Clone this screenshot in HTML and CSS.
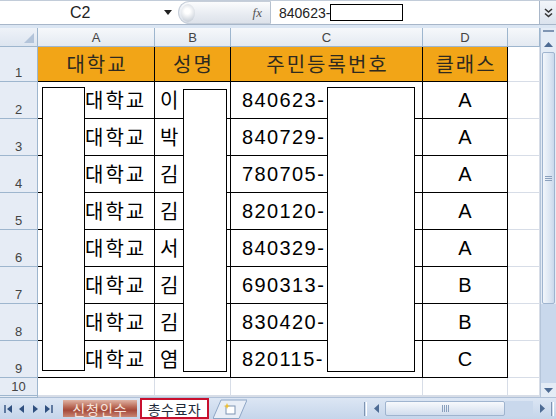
FILE: index.html
```html
<!DOCTYPE html>
<html lang="ko">
<head>
<meta charset="utf-8">
<title>Sheet</title>
<link rel="stylesheet" href="styles.css">
</head>
<body>
<div class="excel">
  <div class="formula-bar">
    <div class="name-box"><span class="name">C2</span><svg class="dd" width="8" height="5" viewBox="0 0 8 5"><path d="M0 0H8L4 5Z" fill="#222"/></svg></div>
    <div class="fx-knob"><span class="knob"></span><span class="fx">fx</span></div>
    <div class="formula-input"><span class="ftext">840623-</span><span class="fmask"></span></div>
    <div class="expand"><svg width="9" height="10" viewBox="0 0 9 10"><path d="M1 1L4.5 4L8 1M1 5.5L4.5 8.5L8 5.5" fill="none" stroke="#333" stroke-width="1.6"/></svg></div>
  </div>
  <div class="band"></div>
  <div class="main">
    <div class="grid-wrap">
      <div class="grid">
        <div class="corner"></div><div class="ch">A</div><div class="ch">B</div><div class="ch">C</div><div class="ch">D</div><div class="ch"></div>

        <div class="rh">1</div><div class="c t hd">대학교</div><div class="c t hd">성명</div><div class="c t hd">주민등록번호</div><div class="c t hd">클래스</div><div class="c"></div>

        <div class="rh">2</div><div class="c t ca">대학교</div><div class="c t cb">이</div><div class="c t cc">840623-</div><div class="c t cd">A</div><div class="c"></div>
        <div class="rh">3</div><div class="c t ca">대학교</div><div class="c t cb">박</div><div class="c t cc">840729-</div><div class="c t cd">A</div><div class="c"></div>
        <div class="rh">4</div><div class="c t ca">대학교</div><div class="c t cb">김</div><div class="c t cc">780705-</div><div class="c t cd">A</div><div class="c"></div>
        <div class="rh">5</div><div class="c t ca">대학교</div><div class="c t cb">김</div><div class="c t cc">820120-</div><div class="c t cd">A</div><div class="c"></div>
        <div class="rh">6</div><div class="c t ca">대학교</div><div class="c t cb">서</div><div class="c t cc">840329-</div><div class="c t cd">A</div><div class="c"></div>
        <div class="rh">7</div><div class="c t ca">대학교</div><div class="c t cb">김</div><div class="c t cc">690313-</div><div class="c t cd">B</div><div class="c"></div>
        <div class="rh">8</div><div class="c t ca">대학교</div><div class="c t cb">김</div><div class="c t cc">830420-</div><div class="c t cd">B</div><div class="c"></div>
        <div class="rh">9</div><div class="c t ca">대학교</div><div class="c t cb">염</div><div class="c t cc">820115-</div><div class="c t cd">C</div><div class="c"></div>

        <div class="rh">10</div><div class="c"></div><div class="c"></div><div class="c"></div><div class="c"></div><div class="c"></div>
        <div class="rh"></div><div class="c"></div><div class="c"></div><div class="c"></div><div class="c"></div><div class="c"></div>
      </div>
      <div class="mask mask-a"></div>
      <div class="mask mask-b"></div>
      <div class="mask mask-c"></div>
    </div>
    <div class="vscroll">
      <div class="vsplit"></div>
      <div class="vbtn"><svg width="9" height="5" viewBox="0 0 9 5"><path d="M0 5L4.5 0L9 5Z" fill="#4d6b94"/></svg></div>
      <div class="vthumb"><svg width="7" height="5" viewBox="0 0 7 5"><path d="M0 .5H7M0 2.5H7M0 4.5H7" stroke="#8aa0bd" stroke-width="1"/></svg></div>
      <div class="vtrack"></div>
      <div class="vbtn"><svg width="9" height="5" viewBox="0 0 9 5"><path d="M0 0L4.5 5L9 0Z" fill="#4d6b94"/></svg></div>
    </div>
  </div>
  <div class="tabbar">
    <div class="nav">
      <svg width="8" height="8" viewBox="0 0 8 8"><path d="M1 0V8" stroke="#2f4f7f" stroke-width="1.4"/><path d="M8 0V8L3 4Z" fill="#2f4f7f"/></svg>
      <svg width="6" height="8" viewBox="0 0 6 8"><path d="M5 0V8L0 4Z" fill="#2f4f7f"/></svg>
      <svg width="6" height="8" viewBox="0 0 6 8"><path d="M1 0V8L6 4Z" fill="#2f4f7f"/></svg>
      <svg width="8" height="8" viewBox="0 0 8 8"><path d="M0 0V8L5 4Z" fill="#2f4f7f"/><path d="M7 0V8" stroke="#2f4f7f" stroke-width="1.4"/></svg>
    </div>
    <div class="tab tab-hidden">신청인수</div>
    <div class="tab tab-active">총수료자</div>
    <div class="tab-new"><svg width="34" height="20" viewBox="0 0 34 20"><path d="M0 19.5L8 1H34L26 19.5Z" fill="#e8eef7" stroke="#8ea6c6"/><rect x="13" y="7" width="9" height="8" fill="#fff" stroke="#7d93b3"/><path d="M14 4L15 6.5L17.5 7L15 7.8L14 10L13 7.8L10.5 7L13 6.5Z" fill="#f0c030"/></svg></div>
    <div class="tab-space"></div>
    <div class="hscroll">
      <div class="hsplit"></div>
      <div class="hbtn"><svg width="5" height="9" viewBox="0 0 5 9"><path d="M5 0V9L0 4.5Z" fill="#4d6b94"/></svg></div>
      <div class="hthumb"><svg width="7" height="7" viewBox="0 0 7 7"><path d="M.5 0V7M2.5 0V7M4.5 0V7M6.5 0V7" stroke="#8aa0bd" stroke-width="1"/></svg></div>
      <div class="htrack"></div>
      <div class="hbtn"><svg width="5" height="9" viewBox="0 0 5 9"><path d="M0 0V9L5 4.5Z" fill="#4d6b94"/></svg></div>
      <div class="hsplit2"></div>
    </div>
  </div>
</div>
</body>
</html>
```

FILE: styles.css
```css
body {
  margin: 0;
  background: #fff;
}

.excel {
  width: 556px;
  height: 419px;
  overflow: hidden;
  display: flex;
  flex-direction: column;
  background: #d3e0f1;
  font-family: "Liberation Sans", "Noto Sans CJK KR", sans-serif;
}

/* formula bar */
.formula-bar {
  height: 25px;
  flex: none;
  display: flex;
  box-sizing: border-box;
  border-top: 1px solid #c2ccd9;
  border-bottom: 1px solid #a7b6c9;
  background: #fff;
}

.name-box {
  width: 178px;
  flex: none;
  display: flex;
  align-items: center;
  box-sizing: border-box;
  padding-left: 70px;
  padding-right: 6px;
}

.name {
  font-size: 16px;
  color: #222;
  flex: 1;
}

.dd {
  display: block;
}

.fx-knob {
  width: 93px;
  flex: none;
  display: flex;
  align-items: center;
  justify-content: space-between;
  box-sizing: border-box;
  padding: 0 8px 0 2px;
  border-radius: 12px 0 0 12px;
  border: 1px solid #c6ced9;
  border-right: 1px solid #b6c1cf;
  background: linear-gradient(#fbfcfd, #e7ebf1 60%, #dde2ea);
}

.knob {
  width: 14px;
  height: 18px;
  border-radius: 50%;
  background: radial-gradient(circle at 45% 40%, #ffffff 20%, #d0d6de 70%, #b9c2cd);
}

.fx {
  font-family: "Liberation Serif", serif;
  font-style: italic;
  font-size: 13px;
  color: #555;
}

.formula-input {
  flex: 1;
  display: flex;
  align-items: center;
  padding-left: 8px;
}

.ftext {
  font-size: 14px;
  color: #222;
}

.fmask {
  width: 73px;
  height: 17px;
  box-sizing: border-box;
  border: 1px solid #000;
  background: #fff;
}

.expand {
  width: 16px;
  flex: none;
  display: flex;
  align-items: center;
  justify-content: center;
  border-left: 1px solid #a9b7c9;
  background: linear-gradient(#f2f5f9, #dbe3ee);
}

.band {
  height: 3px;
  flex: none;
  background: #dbe6f3;
}

/* sheet */
.main {
  height: 369px;
  flex: none;
  display: flex;
}

.grid-wrap {
  position: relative;
  width: 540px;
  flex: none;
  background: #fff;
}

.grid {
  display: grid;
  grid-template-columns: 38px 117px 76px 192px 85px 32px;
  grid-template-rows: 19px 35px repeat(8, 37px) 18px 1px;
}

.grid > div {
  box-sizing: border-box;
  min-width: 0;
  overflow: hidden;
  white-space: nowrap;
}

.corner {
  border-right: 1px solid #9eb6ce;
  border-bottom: 1px solid #9eb6ce;
  background: linear-gradient(#eef2f8, #dde5f0);
  position: relative;
}

.corner::after {
  content: "";
  position: absolute;
  right: 3px;
  bottom: 3px;
  width: 0;
  height: 0;
  border-left: 10px solid transparent;
  border-bottom: 10px solid #b3c4da;
}

.ch {
  display: flex;
  align-items: center;
  justify-content: center;
  font-size: 13px;
  color: #444;
  border-right: 1px solid #9eb6ce;
  border-bottom: 1px solid #9eb6ce;
  background: linear-gradient(#f6f8fb, #e4eaf2);
}

.rh {
  display: flex;
  align-items: flex-end;
  justify-content: center;
  padding-bottom: 1px;
  font-size: 13px;
  color: #444;
  border-right: 1px solid #9eb6ce;
  border-bottom: 1px solid #9eb6ce;
  background: #e6ecf5;
}

.c {
  display: flex;
  align-items: center;
  border-right: 1px solid #d7dde7;
  border-bottom: 1px solid #d7dde7;
  font-size: 20px;
  line-height: 1;
  color: #000;
}

.c.t {
  border-right-color: #000;
  border-bottom-color: #000;
}

.hd {
  justify-content: center;
  background: #f2a517;
  color: #2e2a20;
  font-family: "Noto Sans CJK KR", sans-serif;
  letter-spacing: 2px;
  padding-left: 2px;
}

.ca {
  padding-left: 47px;
  font-family: "Noto Sans CJK KR", sans-serif;
  letter-spacing: 2px;
}

.cb {
  padding-left: 5px;
  font-family: "Noto Sans CJK KR", sans-serif;
}

.cc {
  padding-left: 11px;
  letter-spacing: 1.4px;
}

.cd {
  justify-content: center;
}

.mask {
  position: absolute;
  box-sizing: border-box;
  border: 1px solid #000;
  background: #fff;
}

.mask-a {
  left: 42px;
  top: 59px;
  width: 43px;
  height: 284px;
}

.mask-b {
  left: 183px;
  top: 61px;
  width: 44px;
  height: 283px;
}

.mask-c {
  left: 327px;
  top: 59px;
  width: 88px;
  height: 285px;
}

/* vertical scrollbar */
.vscroll {
  width: 16px;
  flex: none;
  display: flex;
  flex-direction: column;
  background: #e4ecf6;
  border-left: 1px solid #b5c5da;
  box-sizing: border-box;
}

.vsplit {
  height: 5px;
  margin: 2px 2px 0;
  border-top: 2px solid #7f95b3;
}

.vbtn {
  height: 14px;
  display: flex;
  align-items: center;
  justify-content: center;
}

.vthumb {
  height: 252px;
  margin: 1px 1px 0;
  box-sizing: border-box;
  border: 1px solid #9fb4cf;
  border-radius: 2px;
  background: linear-gradient(90deg, #f2f6fb, #dce6f3 60%, #cbd9ec);
  display: flex;
  align-items: center;
  justify-content: center;
}

.vtrack {
  flex: 1;
  background: #c9d8ec;
}

/* tab bar */
.tabbar {
  height: 22px;
  flex: none;
  display: flex;
  align-items: stretch;
  background: linear-gradient(#dce6f4, #c5d5ea);
  border-top: 1px solid #b0c1d8;
  box-sizing: border-box;
}

.nav {
  width: 60px;
  flex: none;
  display: flex;
  align-items: center;
  gap: 7px;
  padding-left: 4px;
  box-sizing: border-box;
}

.tab {
  display: flex;
  align-items: center;
  justify-content: center;
  font-family: "Noto Sans CJK KR", sans-serif;
  font-size: 14px;
  line-height: 1;
  box-sizing: border-box;
}

.tab-hidden {
  width: 74px;
  margin-left: 3px;
  margin-top: 2px;
  margin-bottom: 2px;
  background: linear-gradient(#e0b3a4, #b4604d 45%, #a4483a 60%, #c88572);
  color: #f6e4dc;
  letter-spacing: 1px;
}

.tab-active {
  width: 69px;
  margin-left: 3px;
  background: #fff;
  border: 2px solid #c8102e;
  color: #1e2a3a;
  letter-spacing: 0.5px;
}

.tab-new {
  width: 36px;
  margin-left: 4px;
  display: flex;
  align-items: flex-end;
}

.tab-space {
  flex: 1;
}

.hscroll {
  width: 194px;
  flex: none;
  display: flex;
  align-items: center;
  padding: 0 2px;
  box-sizing: border-box;
}

.hsplit,
.hsplit2 {
  width: 3px;
  height: 14px;
  border-left: 1px solid #7f95b3;
  border-right: 1px solid #fff;
  box-sizing: border-box;
}

.hbtn {
  width: 14px;
  height: 16px;
  display: flex;
  align-items: center;
  justify-content: center;
  margin: 0 2px;
}

.hthumb {
  width: 120px;
  height: 15px;
  box-sizing: border-box;
  border: 1px solid #9fb4cf;
  border-radius: 2px;
  background: linear-gradient(#f7f9fc, #e3eaf4 55%, #d2deee);
  display: flex;
  align-items: center;
  justify-content: center;
}

.htrack {
  flex: 1;
  height: 15px;
  background: #c9d8ec;
}
```
